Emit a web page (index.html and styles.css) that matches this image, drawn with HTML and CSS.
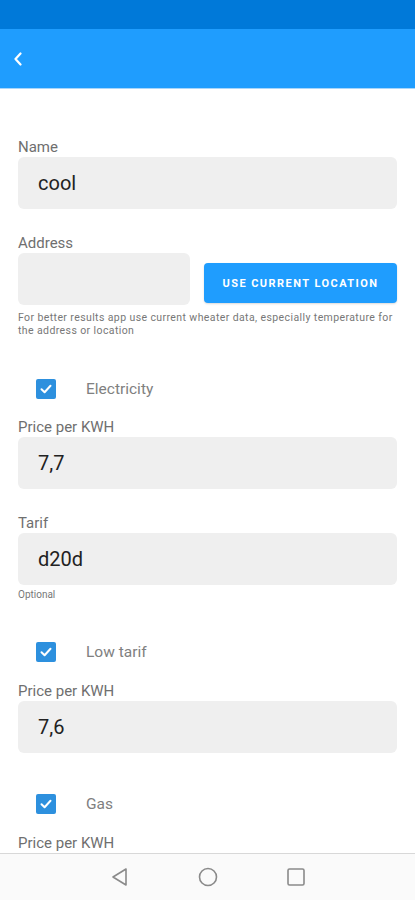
FILE: index.html
```html
<!DOCTYPE html>
<html lang="en">
<head>
  <meta charset="UTF-8">
  <meta name="viewport" content="width=device-width, initial-scale=1.0">
  <title>Place</title>
  <link rel="stylesheet" href="styles.css">
</head>
<body>
<div class="statusbar"></div>
<header class="appbar">
  <button class="back" aria-label="Back">
    <svg width="10" height="14" viewBox="0 0 10 14"><path d="M7.5 1.5 L2.5 7 L7.5 12.5" fill="none" stroke="#fff" stroke-width="2.2" stroke-linecap="round" stroke-linejoin="round"/></svg>
  </button>
</header>

<main class="form">
  <label class="label">Name</label>
  <div class="field">cool</div>

  <label class="label gap">Address</label>
  <div class="address-row">
    <div class="field address"></div>
    <button class="location-btn">USE CURRENT LOCATION</button>
  </div>
  <p class="hint">For better results app use current wheater data, especially temperature for the address or location</p>

  <div class="check-row first">
    <span class="checkbox"><svg width="14" height="14" viewBox="0 0 14 14"><path d="M2.5 7.2 L5.6 10.2 L11.5 3.8" fill="none" stroke="#fff" stroke-width="2" stroke-linecap="round" stroke-linejoin="round"/></svg></span>
    <span class="check-label">Electricity</span>
  </div>
  <label class="label">Price per KWH</label>
  <div class="field">7,7</div>

  <label class="label gap">Tarif</label>
  <div class="field">d20d</div>
  <p class="hint small">Optional</p>

  <div class="check-row">
    <span class="checkbox"><svg width="14" height="14" viewBox="0 0 14 14"><path d="M2.5 7.2 L5.6 10.2 L11.5 3.8" fill="none" stroke="#fff" stroke-width="2" stroke-linecap="round" stroke-linejoin="round"/></svg></span>
    <span class="check-label">Low tarif</span>
  </div>
  <label class="label">Price per KWH</label>
  <div class="field">7,6</div>

  <div class="check-row">
    <span class="checkbox"><svg width="14" height="14" viewBox="0 0 14 14"><path d="M2.5 7.2 L5.6 10.2 L11.5 3.8" fill="none" stroke="#fff" stroke-width="2" stroke-linecap="round" stroke-linejoin="round"/></svg></span>
    <span class="check-label">Gas</span>
  </div>
  <label class="label">Price per KWH</label>
  <div class="field">7,2</div>
</main>

<nav class="navbar">
  <svg width="20" height="20" viewBox="0 0 20 20"><path d="M16 2 L16 18 L3 10 Z" fill="none" stroke="#8a8a8a" stroke-width="1.6" stroke-linejoin="round"/></svg>
  <svg width="20" height="20" viewBox="0 0 20 20"><circle cx="10" cy="10" r="8.5" fill="none" stroke="#8a8a8a" stroke-width="1.6"/></svg>
  <svg width="20" height="20" viewBox="0 0 20 20"><rect x="2" y="2" width="16" height="16" rx="1.5" fill="none" stroke="#8a8a8a" stroke-width="1.6"/></svg>
</nav>
</body>
</html>
```

FILE: styles.css
```css
body {
  font-family: Roboto, "Liberation Sans", sans-serif;
  margin: 0;
  background-color: #fff;
  width: 415px;
  height: 900px;
  overflow: hidden;
}
.statusbar {
  height: 29px;
  background-color: #0079d9;
}
.appbar {
  height: 59px;
  background-color: #1f9dfe;
  display: flex;
  align-items: center;
  padding-left: 13px;
  box-shadow: 0 1px 0 #a8d6fb;
  position: relative;
}
.back {
  background: none;
  border: none;
  padding: 0;
  display: flex;
}
.form {
  padding: 50px 18px 0;
}
.label {
  display: block;
  font-size: 15px;
  line-height: 18px;
  color: #6f6f6f;
  margin-bottom: 1px;
}
.label.gap {
  margin-top: 25px;
}
.field {
  height: 52px;
  background-color: #efefef;
  border-radius: 6px;
  display: flex;
  align-items: center;
  padding-left: 20px;
  font-size: 20px;
  color: #222;
}
.address-row {
  display: flex;
  align-items: flex-end;
  gap: 14px;
}
.field.address {
  width: 152px;
}
.location-btn {
  flex: 1;
  height: 40px;
  margin-bottom: 2px;
  background-color: #1f9dfe;
  color: #fff;
  border: none;
  border-radius: 4px;
  font-family: Roboto, "Liberation Sans", sans-serif;
  font-weight: bold;
  font-size: 11px;
  letter-spacing: 1.45px;
  box-shadow: 0 1px 2px rgba(0, 0, 0, 0.15);
}
.hint {
  margin: 6px 0 0;
  font-size: 10.5px;
  line-height: 13px;
  letter-spacing: 0.4px;
  color: #777;
}
.hint.small {
  margin-top: 3px;
  font-size: 10px;
  letter-spacing: 0;
}
.check-row {
  display: flex;
  align-items: center;
  gap: 30px;
  height: 40px;
  padding-left: 18px;
  margin-top: 31px;
  margin-bottom: 10px;
}
.check-row.first {
  margin-top: 32px;
  margin-bottom: 9px;
}
.checkbox {
  width: 20px;
  height: 20px;
  border-radius: 2px;
  background-color: #2d90de;
  display: flex;
  align-items: center;
  justify-content: center;
}
.check-label {
  font-size: 15.5px;
  color: #808080;
}
.navbar {
  position: fixed;
  left: 0;
  right: 0;
  bottom: 0;
  height: 46px;
  background-color: #fafafa;
  border-top: 1px solid #d8d8d8;
  display: flex;
  align-items: center;
  justify-content: center;
  gap: 68px;
}
```
